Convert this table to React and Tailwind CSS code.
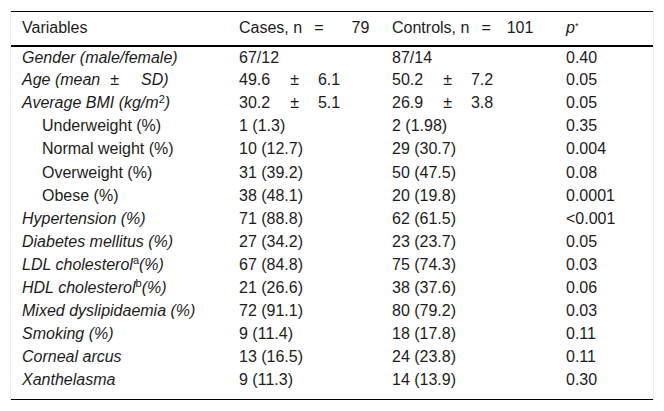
import React from 'react';

const rows = [
    { label: 'Gender (male/female)', it: true, cases: '67/12', controls: '87/14', p: '0.40' },
    { label: 'age', it: true, cases: ['49.6', '6.1'], controls: ['50.2', '7.2'], p: '0.05' },
    { label: 'bmi', it: true, cases: ['30.2', '5.1'], controls: ['26.9', '3.8'], p: '0.05' },
    { label: 'Underweight (%)', sub: true, cases: '1 (1.3)', controls: '2 (1.98)', p: '0.35' },
    { label: 'Normal weight (%)', sub: true, cases: '10 (12.7)', controls: '29 (30.7)', p: '0.004' },
    { label: 'Overweight (%)', sub: true, cases: '31 (39.2)', controls: '50 (47.5)', p: '0.08' },
    { label: 'Obese (%)', sub: true, cases: '38 (48.1)', controls: '20 (19.8)', p: '0.0001' },
    { label: 'Hypertension (%)', it: true, cases: '71 (88.8)', controls: '62 (61.5)', p: '<0.001' },
    { label: 'Diabetes mellitus (%)', it: true, cases: '27 (34.2)', controls: '23 (23.7)', p: '0.05' },
    { label: 'ldl', it: true, cases: '67 (84.8)', controls: '75 (74.3)', p: '0.03' },
    { label: 'hdl', it: true, cases: '21 (26.6)', controls: '38 (37.6)', p: '0.06' },
    { label: 'Mixed dyslipidaemia (%)', it: true, cases: '72 (91.1)', controls: '80 (79.2)', p: '0.03' },
    { label: 'Smoking (%)', it: true, cases: '9 (11.4)', controls: '18 (17.8)', p: '0.11' },
    { label: 'Corneal arcus', it: true, cases: '13 (16.5)', controls: '24 (23.8)', p: '0.11' },
    { label: 'Xanthelasma', it: true, cases: '9 (11.3)', controls: '14 (13.9)', p: '0.30' },
];

function Label({ label }) {
    if (label === 'age')
        return (
            <>
                Age (mean<span className="ml-[10px]">±</span>
                <span className="ml-[22px]">SD)</span>
            </>
        );
    if (label === 'bmi')
        return (
            <>
                Average BMI (kg/m<sup className="text-[11px] not-italic">2</sup>)
            </>
        );
    if (label === 'ldl')
        return (
            <>
                LDL cholesterol<sup className="text-[11px] not-italic">a</sup>(%)
            </>
        );
    if (label === 'hdl')
        return (
            <>
                HDL cholesterol<sup className="text-[11px] not-italic">b</sup>(%)
            </>
        );
    return label;
}

function Value({ v }) {
    if (Array.isArray(v))
        return (
            <>
                {v[0]}
                <span className="ml-[20px]">±</span>
                <span className="ml-[19px]">{v[1]}</span>
            </>
        );
    return v;
}

export default function App() {
    const cell = 'h-[23.1px] p-0 pl-[11px] align-middle whitespace-nowrap';
    return (
        <div className="h-[411px] w-[664px] bg-white pl-[10px] pt-[11px] text-[16px] leading-[20px] text-[#1c1c1c]" style={{ fontFamily: '"Liberation Sans", Arial, sans-serif' }}>
            <div className="h-[389px] w-[644px] border-x border-[#ececec]">
                <div className="border-b border-black">
                    <table className="w-full table-fixed border-collapse text-left">
                        <colgroup>
                            <col className="w-[217px]" />
                            <col className="w-[153px]" />
                            <col className="w-[174px]" />
                            <col />
                        </colgroup>
                        <thead>
                            <tr className="h-[34px] border-t border-b-2 border-black">
                                <th className={`${cell} font-normal`}>Variables</th>
                                <th className={`${cell} font-normal`}>
                                    Cases, n<span className="ml-[12px]">=</span>
                                    <span className="ml-[28px]">79</span>
                                </th>
                                <th className={`${cell} font-normal`}>
                                    Controls, n<span className="ml-[12px]">=</span>
                                    <span className="ml-[16px]">101</span>
                                </th>
                                <th className={`${cell} font-normal`}>
                                    <i>p</i>
                                    <sup className="text-[9px]">*</sup>
                                </th>
                            </tr>
                        </thead>
                        <tbody>
                            {rows.map((r) => (
                                <tr key={r.label}>
                                    <td className={`${cell} ${r.it ? 'italic' : ''} ${r.sub ? 'pl-[31px]' : ''}`}>
                                        <Label label={r.label} />
                                    </td>
                                    <td className={cell}>
                                        <Value v={r.cases} />
                                    </td>
                                    <td className={cell}>
                                        <Value v={r.controls} />
                                    </td>
                                    <td className={cell}>{r.p}</td>
                                </tr>
                            ))}
                        </tbody>
                    </table>
                    <div className="h-[7px]" />
                </div>
            </div>
        </div>
    );
}
